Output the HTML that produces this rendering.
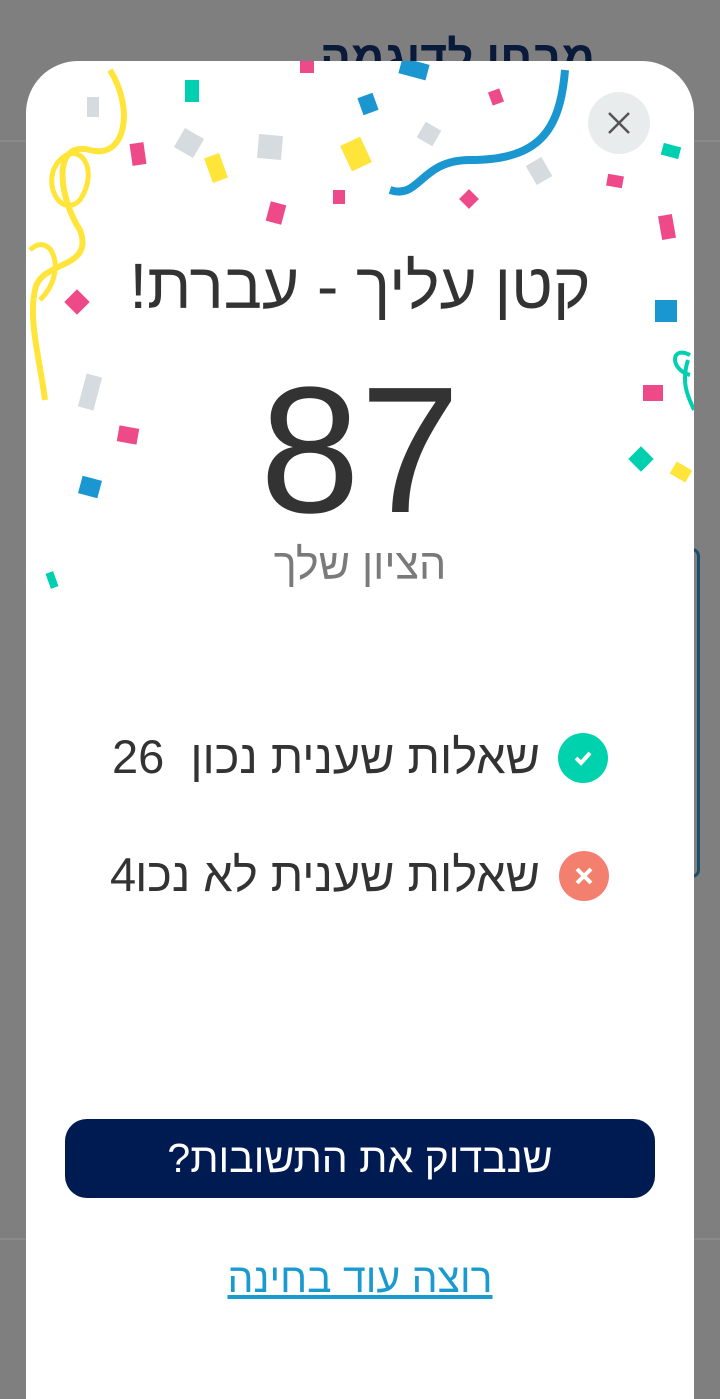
<!DOCTYPE html>
<html style="overflow:hidden;height:1399px"><head><meta charset="utf-8"><style>
*{margin:0;padding:0;box-sizing:border-box}
body{width:720px;height:1399px;background:#7f7f7f;position:relative;overflow:hidden;font-family:"Liberation Sans","Noto Sans CJK SC",sans-serif}
.modal{position:absolute;left:26px;top:61px;width:668px;height:1338px;background:#fff;border-radius:52px 52px 0 0;overflow:hidden}
.a{position:absolute;white-space:nowrap}
</style></head><body>
<div class="a" style="left:0;top:140px;width:720px;height:2px;background:#8a8a8a"></div>
<div class="a" style="left:0;top:1238px;width:720px;height:2px;background:#8a8a8a"></div>
<div class="a" style="left:320px;top:30px;font-size:46px;color:#0a1a3a;font-weight:bold" dir="rtl">מבחן לדוגמה</div>
<div class="a" style="left:655px;top:55px;font-size:36px;color:#0a1a3a">›</div>
<div class="a" style="left:690px;top:548px;width:10px;height:330px;border:3px solid #1b4d6e;border-left:none;border-radius:0 8px 8px 0"></div>
<div class="modal">
<svg class="a" style="left:0;top:0" width="668" height="560" viewBox="26 61 668 560">
<path d="M110 70 C135 110 125 160 90 150 C50 140 60 200 80 230 C95 270 40 260 35 290 C28 320 40 360 45 400" stroke="#ffe53a" stroke-width="6" fill="none"/>
<path d="M60 160 C80 140 100 170 80 200 C60 220 40 180 60 160 M30 250 C50 230 70 270 40 300" stroke="#ffe53a" stroke-width="5" fill="none"/>
<path d="M565 70 C560 130 540 160 470 160 C420 160 420 200 390 190" stroke="#1a96d0" stroke-width="8" fill="none"/>
<path d="M690 355 C670 345 670 370 690 375 M688 360 C680 385 690 400 694 410" stroke="#00d0b0" stroke-width="4" fill="none"/>
<g>
<rect x="185" y="80" width="14" height="22" fill="#00d0b0"/>
<rect x="87" y="97" width="12" height="20" fill="#d5dbde"/>
<rect x="131" y="143" width="14" height="22" fill="#ee4a8a" transform="rotate(-8 138 154)"/>
<rect x="178" y="132" width="22" height="22" fill="#d5dbde" transform="rotate(30 189 143)"/>
<rect x="208" y="155" width="16" height="26" fill="#ffe53a" transform="rotate(-20 216 168)"/>
<rect x="258" y="135" width="24" height="24" fill="#d5dbde" transform="rotate(5 270 147)"/>
<rect x="268" y="203" width="16" height="20" fill="#ee4a8a" transform="rotate(15 276 213)"/>
<rect x="345" y="140" width="22" height="28" fill="#ffe53a" transform="rotate(-25 356 154)"/>
<rect x="360" y="95" width="16" height="18" fill="#1a96d0" transform="rotate(-20 368 104)"/>
<rect x="420" y="125" width="18" height="18" fill="#d5dbde" transform="rotate(30 429 134)"/>
<rect x="490" y="90" width="12" height="14" fill="#ee4a8a" transform="rotate(-20 496 97)"/>
<rect x="530" y="160" width="18" height="22" fill="#d5dbde" transform="rotate(-30 539 171)"/>
<rect x="462" y="192" width="14" height="14" fill="#ee4a8a" transform="rotate(45 469 199)"/>
<rect x="333" y="190" width="12" height="14" fill="#ee4a8a"/>
<rect x="400" y="61" width="28" height="16" fill="#1a96d0" transform="rotate(15 414 69)"/>
<rect x="300" y="61" width="14" height="12" fill="#ee4a8a"/>
<rect x="607" y="175" width="16" height="12" fill="#ee4a8a" transform="rotate(10 615 181)"/>
<rect x="662" y="145" width="18" height="12" fill="#00d0b0" transform="rotate(15 671 151)"/>
<rect x="660" y="215" width="14" height="24" fill="#ee4a8a" transform="rotate(-10 667 227)"/>
<rect x="655" y="300" width="22" height="22" fill="#1a96d0"/>
<rect x="643" y="385" width="20" height="16" fill="#ee4a8a"/>
<rect x="632" y="450" width="18" height="18" fill="#00d0b0" transform="rotate(45 641 459)"/>
<rect x="672" y="465" width="18" height="14" fill="#ffe53a" transform="rotate(30 681 472)"/>
<rect x="68" y="293" width="18" height="18" fill="#ee4a8a" transform="rotate(45 77 302)"/>
<rect x="82" y="375" width="16" height="34" fill="#d5dbde" transform="rotate(15 90 392)"/>
<rect x="118" y="427" width="20" height="16" fill="#ee4a8a" transform="rotate(10 128 435)"/>
<rect x="80" y="478" width="20" height="18" fill="#1a96d0" transform="rotate(15 90 487)"/>
<rect x="48" y="572" width="8" height="16" fill="#00d0b0" transform="rotate(-20 52 580)"/>
</g>
</svg>
<div class="a" style="left:562px;top:31px;width:62px;height:62px;border-radius:50%;background:#e9eced"></div>
<svg class="a" style="left:581px;top:50px" width="24" height="24"><path d="M2 2L22 22M22 2L2 22" stroke="#555" stroke-width="2.5"/></svg>
<div class="a" style="left:0;width:668px;top:188px;text-align:center;font-size:64px;color:#333" dir="rtl">קטן עליך - עברת!</div>
<div class="a" style="left:0;width:668px;top:290px;text-align:center;font-size:180px;color:#333;line-height:200px">87</div>
<div class="a" style="left:0;width:668px;top:480px;text-align:center;font-size:43px;color:#7a7a7a" dir="rtl">הציון שלך</div>
<div class="a" style="left:532px;top:672px;width:50px;height:50px;border-radius:50%;background:#00d2ae"></div>
<svg class="a" style="left:545px;top:685px" width="24" height="24"><path d="M5 12l5 5 9-10" stroke="#fff" stroke-width="4" fill="none"/></svg>
<div class="a" style="right:154px;top:668px;font-size:47px;color:#333" dir="rtl">שאלות שענית נכון&nbsp; 26</div>
<div class="a" style="left:533px;top:790px;width:50px;height:50px;border-radius:50%;background:#f3806f"></div>
<svg class="a" style="left:548px;top:805px" width="20" height="20"><path d="M3 3L17 17M17 3L3 17" stroke="#fff" stroke-width="4"/></svg>
<div class="a" style="right:154px;top:786px;font-size:47px;color:#333" dir="rtl">שאלות שענית לא נכו</div>
<div class="a" style="left:84px;top:786px;font-size:47px;color:#333">4</div>
<div class="a" style="left:39px;top:1058px;width:590px;height:79px;border-radius:22px;background:#001a52;color:#fff;font-size:41px;text-align:center;line-height:79px" dir="rtl">שנבדוק את התשובות?</div>
<div class="a" style="left:0;width:668px;top:1194px;text-align:center;font-size:41px;color:#1a9bd0;text-decoration:underline" dir="rtl">רוצה עוד בחינה</div>
</div>
</body></html>
